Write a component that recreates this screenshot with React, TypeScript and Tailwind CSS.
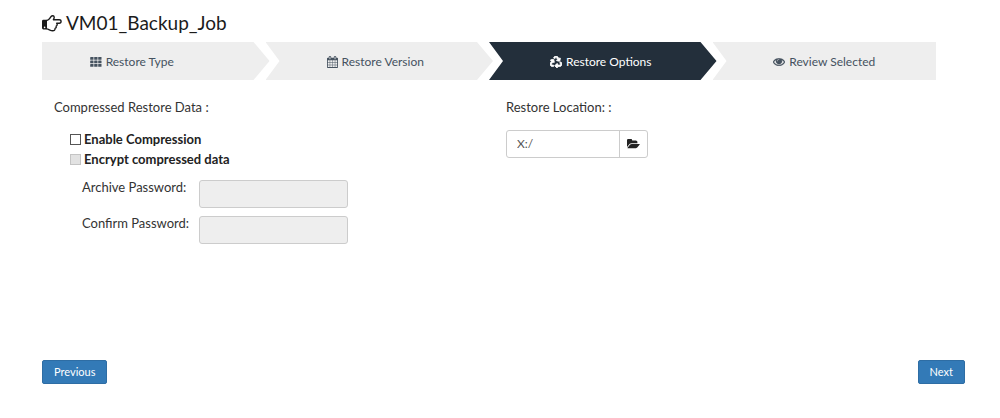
import { useState } from 'react';
import type { ReactNode } from 'react';
import { FaRecycle } from 'react-icons/fa';

function HandIcon() {
  return (
    <svg viewBox="0 0 20 18" className="h-[18px] w-5 shrink-0" fill="none" aria-hidden="true">
      <path fill="#1b1b1b" fillRule="evenodd" d="M1.4 5.8H5v9.7H1.4Q0 15.500 0 14.100V7.200Q0 5.800 1.400 5.800zM2.600 12.600a.8.800 0 1 0 0 1.600.8.800 0 0 0 0-1.600z" />
      <path
        stroke="#1b1b1b"
        strokeWidth="1.4"
        strokeLinejoin="round"
        d="M4.700 6.500C7 6.500 7.900 3.800 9.100 2.500C10.100 1.300 12.200 1.400 12.200 3.200C12.200 4.400 11.500 5.100 11.400 5.700H17.200C19.700 5.700 19.700 9.200 17.200 9.200H14.700C15.600 10.200 15.200 11.700 14.200 12.100C14.500 13.200 14 14.100 13.100 14.400C13.200 16 12.200 16.800 10.700 16.800C8.200 16.800 6.700 14.900 4.700 14.900"
      />
    </svg>
  );
}

function GridIcon() {
  return (
    <svg viewBox="0 0 12 10" className="h-[10px] w-3" fill="currentColor" aria-hidden="true">
      {[0, 4, 8].map((x) =>
        [0, 3.500, 7].map((y) => <rect key={`${x}-${y}`} x={x + 0.2} y={y} width="3.300" height="2.800" rx="0.4" />),
      )}
    </svg>
  );
}

function CalendarIcon() {
  return (
    <svg viewBox="64 0 1664 1792" className="h-3 w-[11px]" fill="currentColor" aria-hidden="true">
      <path d="M192 1664h288v-288h-288v288zm352 0h320v-288h-320v288zm-352-352h288v-320h-288v320zm352 0h320v-320h-320v320zm-352-384h288v-288h-288v288zm736 736h320v-288h-320v288zm-384-736h320v-288h-320v288zm768 736h288v-288h-288v288zm-384-352h320v-320h-320v320zm-352-864v-288q0-13-9.5-22.5t-22.5-9.5h-64q-13 0-22.5 9.5t-9.5 22.5v288q0 13 9.5 22.5t22.5 9.5h64q13 0 22.5-9.5t9.5-22.5zm736 864h288v-320h-288v320zm-384-384h320v-288h-320v288zm384 0h288v-288h-288v288zm32-480v-288q0-13-9.5-22.5t-22.5-9.5h-64q-13 0-22.5 9.5t-9.5 22.5v288q0 13 9.5 22.5t22.5 9.5h64q13 0 22.5-9.5t9.5-22.5zm384-64v1280q0 52-38 90t-90 38h-1408q-52 0-90-38t-38-90v-1280q0-52 38-90t90-38h128v-96q0-66 47-113t113-47h64q66 0 113 47t47 113v96h384v-96q0-66 47-113t113-47h64q66 0 113 47t47 113v96h128q52 0 90 38t38 90z" />
    </svg>
  );
}

function EyeIcon() {
  return (
    <svg viewBox="0 384 1792 1152" className="h-2 w-3" fill="currentColor" stroke="currentColor" strokeWidth="50" aria-hidden="true">
      <path d="M1664 960q-152-236-381-353 61 104 61 225 0 185-131.5 316.5t-316.5 131.5-316.5-131.5-131.5-316.5q0-121 61-225-229 117-381 353 133 205 333.5 326.5t434.5 121.5 434.5-121.5 333.5-326.5zm-720-384q0-20-14-34t-34-14q-125 0-214.5 89.5t-89.5 214.5q0 20 14 34t34 14 34-14 14-34q0-86 61-147t147-61q20 0 34-14t14-34zm848 384q0 34-20 69-140 230-376.5 368.5t-499.5 138.5-499.5-139-376.5-368q-20-35-20-69t20-69q140-229 376.5-368t499.5-139 499.5 139 376.5 368q20 35 20 69z" />
    </svg>
  );
}

function FolderIcon() {
  return (
    <svg viewBox="0 256 1920 1280" className="h-[10px] w-[13px]" fill="currentColor" aria-hidden="true">
      <path d="M1879 952q0 31-31 66l-336 396q-43 51-120.5 86.5t-143.5 35.5h-1088q-34 0-60.5-13t-26.5-43q0-31 31-66l336-396q43-51 120.5-86.5t143.5-35.5h1088q34 0 60.5 13t26.5 43zm-343-344v160h-832q-94 0-197 47.5t-164 119.5l-337 396-5 6q0-4-.5-12.5t-.5-12.5v-960q0-92 66-158t158-66h320q92 0 158 66t66 158v32h544q92 0 158 66t66 158z" />
    </svg>
  );
}

const steps: { label: string; icon: ReactNode; className: string }[] = [
  {
    label: 'Restore Type',
    icon: <GridIcon />,
    className: '-mr-1 bg-[#eeeeee] pr-12 text-[#45525f] [clip-path:polygon(0_0,calc(100%-16px)_0,100%_50%,calc(100%-16px)_100%,0_100%)]',
  },
  {
    label: 'Restore Version',
    icon: <CalendarIcon />,
    className:
      '-mr-1 bg-[#eeeeee] pr-2 text-[#45525f] [clip-path:polygon(0_0,calc(100%-16px)_0,100%_50%,calc(100%-16px)_100%,0_100%,14px_50%)]',
  },
  {
    label: 'Restore Options',
    icon: <FaRecycle className="size-3 stroke-current stroke-[36]" aria-hidden="true" />,
    className:
      '-mr-1 bg-[#232f3b] pr-1 text-white [clip-path:polygon(0_0,calc(100%-16px)_0,100%_50%,calc(100%-16px)_100%,0_100%,14px_50%)]',
  },
  {
    label: 'Review Selected',
    icon: <EyeIcon />,
    className: 'bg-[#eeeeee] text-[#45525f] [clip-path:polygon(0_0,100%_0,100%_100%,0_100%,14px_50%)]',
  },
];

export default function App() {
  const [compress, setCompress] = useState(false);
  const [encrypt, setEncrypt] = useState(false);
  const [location, setLocation] = useState('X:/');
  const box = 'size-[11px] shrink-0 appearance-none border border-[#555555] bg-white checked:bg-[#337ab7] disabled:border-[#c4c4c4] disabled:bg-[#e2e2e2]';
  const password = 'h-7 w-[149px] rounded-[3px] border border-[#cccccc] bg-white px-2 text-xs disabled:bg-[#eeeeee]';
  const action = 'h-6 rounded-[2px] border border-[#2e6da4] bg-[#337ab7] px-[11px] text-[11px] text-white';

  return (
    <main className="bg-white pt-3 pr-[35px] pb-8 pl-[42px] font-['Lato',sans-serif] text-[13px] leading-5 text-[#333333]">
      <h1 className="flex h-[30px] items-start gap-1 text-[19px] leading-[22px] text-[#1b1b1b]">
        <span className="pt-[2px]">
          <HandIcon />
        </span>
        VM01_Backup_Job
      </h1>

      <nav aria-label="Restore steps" className="mr-[29px]">
        <ol className="grid grid-cols-4">
          {steps.map((step) => (
            <li
              key={step.label}
              aria-current={step.label === 'Restore Options' ? 'step' : undefined}
              className={`flex h-[38px] items-center justify-center gap-1 pt-[2px] text-xs ${step.className}`}
            >
              {step.icon}
              {step.label}
            </li>
          ))}
        </ol>
      </nav>

      <div className="mr-[29px] grid min-h-[280px] grid-cols-2 gap-x-[22px] pt-[17px] pl-3">
        <section>
          <h2>Compressed Restore Data :</h2>
          <div className="mt-3 pl-4 font-bold text-[#222222]">
            <label className="flex items-center gap-[3px]">
              <input type="checkbox" className={box} checked={compress} onChange={(e) => setCompress(e.target.checked)} />
              Enable Compression
            </label>
            <label className="flex items-center gap-[3px]">
              <input
                type="checkbox"
                className={box}
                checked={encrypt}
                disabled={!compress}
                onChange={(e) => setEncrypt(e.target.checked)}
              />
              Encrypt compressed data
            </label>
          </div>
          <div className="mt-[11px] grid grid-cols-[109px_auto] justify-start gap-x-2 gap-y-2 pl-7">
            <label htmlFor="archive-password" className="-mt-[3px] whitespace-nowrap">Archive Password:</label>
            <input id="archive-password" type="password" disabled={!encrypt} className={password} />
            <label htmlFor="confirm-password" className="-mt-[3px] whitespace-nowrap">Confirm Password:</label>
            <input id="confirm-password" type="password" disabled={!encrypt} className={password} />
          </div>
        </section>

        <section>
          <label htmlFor="restore-location" className="block">Restore Location: :</label>
          <div className="mt-[13px] flex h-7 w-[142px] overflow-hidden rounded-[3px] border border-[#cccccc]">
            <input
              id="restore-location"
              type="text"
              value={location}
              onChange={(e) => setLocation(e.target.value)}
              className="min-w-0 flex-1 px-[10px] text-xs text-[#555555]"
            />
            <button type="button" aria-label="Browse folders" className="flex w-7 items-center justify-center border-l border-[#cccccc] text-[#222222]">
              <FolderIcon />
            </button>
          </div>
        </section>
      </div>

      <footer className="flex justify-between">
        <button type="button" className={action}>Previous</button>
        <button type="button" className={action}>Next</button>
      </footer>
    </main>
  );
}
